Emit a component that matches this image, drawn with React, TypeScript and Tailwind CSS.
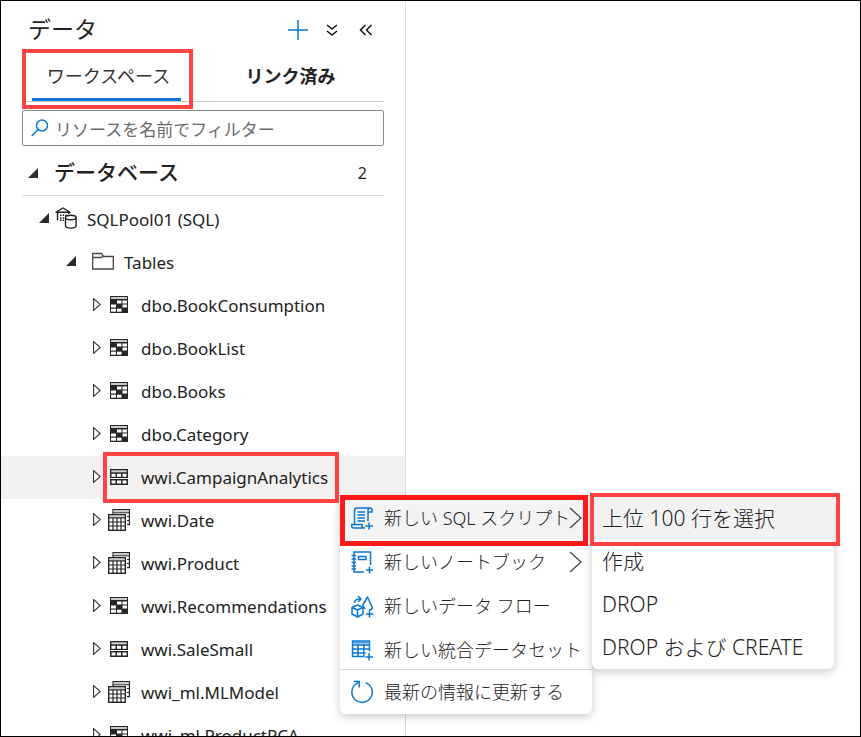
import type { ReactNode } from "react";

type TableKind = "replicated" | "roundRobin" | "hash";

const tables: { name: string; kind: TableKind; selected?: boolean }[] = [
  { name: "dbo.BookConsumption", kind: "replicated" },
  { name: "dbo.BookList", kind: "replicated" },
  { name: "dbo.Books", kind: "replicated" },
  { name: "dbo.Category", kind: "replicated" },
  { name: "wwi.CampaignAnalytics", kind: "roundRobin", selected: true },
  { name: "wwi.Date", kind: "hash" },
  { name: "wwi.Product", kind: "hash" },
  { name: "wwi.Recommendations", kind: "replicated" },
  { name: "wwi.SaleSmall", kind: "roundRobin" },
  { name: "wwi_ml.MLModel", kind: "hash" },
  { name: "wwi_ml.ProductPCA", kind: "replicated" },
];

function ReplicatedIcon() {
  return (
    <svg width="18" height="17" viewBox="0 0 18 17" aria-hidden="true">
      <rect width="18" height="17" fill="#262626" />
      <rect x="1" y="1" width="16" height="2" fill="#c9cbc9" />
      <g fill="#fff">
        <rect x="7" y="4.500" width="4.500" height="3" />
        <rect x="12.500" y="4.500" width="4.500" height="3" />
        <rect x="1" y="8.500" width="5" height="3" />
        <rect x="12.500" y="8.500" width="4.500" height="3" />
        <rect x="1" y="12.700" width="5" height="3" />
        <rect x="7" y="12.700" width="4.500" height="3" />
      </g>
    </svg>
  );
}

function RoundRobinIcon() {
  return (
    <svg width="18" height="16" viewBox="0 0 18 16" aria-hidden="true">
      <rect width="18" height="9" fill="#262626" />
      <rect x="1.300" y="1.300" width="15.400" height="2" fill="#d0d0d0" />
      <rect y="10" width="18" height="6" fill="#262626" />
      <g fill="#fff">
        <rect x="1.500" y="4.800" width="4" height="3" />
        <rect x="7" y="4.800" width="4" height="3" />
        <rect x="12.500" y="4.800" width="4" height="3" />
        <rect x="1.500" y="11.500" width="4" height="3" />
        <rect x="7" y="11.500" width="4" height="3" />
        <rect x="12.500" y="11.500" width="4" height="3" />
      </g>
    </svg>
  );
}

function HashIcon() {
  return (
    <svg width="22" height="22" viewBox="0 0 22 22" fill="none" stroke="#262626" aria-hidden="true">
      <path d="M5 5V.6h16.400v15H19" strokeWidth="1.200" />
      <path d="M5.600 1.300h15.200v2H5.600z" fill="#c9c9c9" stroke="none" />
      <path d="M5 3.800h16.400M19 7.500h2.400M19 11.500h2.400" />
      <rect x="0.700" y="5.700" width="16.600" height="15.600" fill="#fff" strokeWidth="1.400" />
      <path d="M1.400 7.400h15.200" stroke="#c4c4c4" />
      <path d="M1 8.800h16M1 13h16M1 17h16M5 9v12M9 9v12M13 9v12" strokeWidth="1.200" />
    </svg>
  );
}

function PoolIcon() {
  return (
    <svg width="22" height="22" viewBox="0 0 22 22" fill="none" stroke="#222" strokeWidth="1.400" aria-hidden="true">
      <path d="M0.500 5.500 8 1l7.500 4.500M1 5.300h14M2.500 5.500v8M13.700 5.500V7" />
      <path d="M5 8.200h7M5 11h4M5 13.300h4" strokeDasharray="1.500 1.200" />
      <ellipse cx="15.800" cy="10.500" rx="5.300" ry="2.200" />
      <path d="M10.500 10.500v8.300c0 1.300 2.400 2.300 5.300 2.300s5.300-1 5.300-2.300v-8.300" />
    </svg>
  );
}

function FolderIcon() {
  return (
    <svg width="22" height="18" viewBox="0 0 22 18" fill="none" stroke="#4a4543" strokeWidth="1.300" aria-hidden="true">
      <path d="M.7 17V1.500H9.500l2 3h9.800V17z" />
      <path d="M.7 5.500h8.500l2.300-1.500" />
    </svg>
  );
}

function OpenArrow() {
  return (
    <svg width="10" height="10" viewBox="0 0 10 10" className="shrink-0" aria-hidden="true">
      <path d="M10 0v10H0z" fill="#2b2b2b" />
    </svg>
  );
}

function ClosedArrow() {
  return (
    <svg width="8" height="13" viewBox="0 0 8 13" className="block" aria-hidden="true">
      <path d="M.6 .6v11.800L7.300 6.500z" fill="#fff" stroke="#333" strokeWidth="1.100" />
    </svg>
  );
}

function ScriptIcon() {
  return (
    <svg width="22" height="23" viewBox="0 0 22 23" fill="none" stroke="#0b78d4" strokeWidth="1.500" aria-hidden="true">
      <path d="M3.500 17V3.500C3.500 1.800 4.500 1 6 1h13c1.300 0 2 .8 2 2.300V5h-4V3c0-1.200.7-2 2-2M17 5v9M14 21H3c-1.500 0-2.300-.9-2.300-2v-1.500H11V19c0 1.200.8 2 2 2" />
      <path d="M6.500 5h7.500M6.500 8h7.500M6.500 11h7.500M6.500 14h7.500" />
      <path d="M18 15.500v7M14.500 19H22" />
    </svg>
  );
}

function NotebookIcon() {
  return (
    <svg width="22" height="23" viewBox="0 0 22 23" fill="none" stroke="#0b78d4" strokeWidth="1.500" aria-hidden="true">
      <path d="M13 21H3V1h16.500v13" />
      <path d="M7.500 5.500H15v3H7.500z" />
      <path d="M.5 4.500H5M.5 8H5M.5 11.500H5M.5 15H5M.5 18H5" />
      <path d="M18.500 15.500v7M15 19h7" />
    </svg>
  );
}

function DataFlowIcon() {
  return (
    <svg width="23" height="23" viewBox="0 0 23 23" fill="none" stroke="#0b78d4" strokeWidth="1.500" strokeLinejoin="round" aria-hidden="true">
      <path d="M1 12.500 6.500 10l5.500 2.500v6.500L6.500 22 1 19zM1 12.500 6.500 15l5.500-2.500M6.500 15v7" />
      <path d="M3.500 8C3.500 5 5.500 4 9.500 4M7 1l3 3-3 3" />
      <path d="M11.500 10.500 16.500 2l5 11c-.8 1.300-2 2-3.500 2M14 14l-2-3.500" />
      <path d="M18.500 15.500v7M15 19h7.500" />
    </svg>
  );
}

function DatasetIcon() {
  return (
    <svg width="22" height="21" viewBox="0 0 22 21" fill="none" stroke="#0b78d4" strokeWidth="1.500" aria-hidden="true">
      <path d="M13.500 16.500h-12V1h17v10.500M1.500 5h17M1.500 9h17M1.500 13h13M7 4v12.500M12.800 4v12.500" />
      <path d="M1.500 2.500h17" strokeWidth="2" stroke="#3d94dc" />
      <path d="M18 13v7.500M14.300 17H22" />
    </svg>
  );
}

function RefreshIcon() {
  return (
    <svg width="24" height="24" viewBox="0 0 24 24" fill="none" stroke="#0b78d4" strokeWidth="1.500" aria-hidden="true">
      <path d="M15.500 2.600a10.200 10.200 0 1 1-9.500 1.400L9 1.800" />
      <path d="M3.500 1.500H9.200V7.500" />
    </svg>
  );
}

function Outline({ className }: { className: string }) {
  return <span aria-hidden="true" className={`pointer-events-none absolute ${className}`} />;
}

function MenuItem({ icon, label, submenu, active }: { icon: ReactNode; label: string; submenu?: boolean; active?: boolean }) {
  return (
    <button
      type="button"
      role="menuitem"
      className={`relative flex h-11 w-full items-center pl-2.5 text-left text-lg font-light ${active ? "bg-[#f3f3f3]" : ""}`}
    >
      <span className="mr-2.5 flex w-6 shrink-0 justify-center">{icon}</span>
      <span className="whitespace-nowrap">{label}</span>
      {submenu && (
        <svg width="13" height="22" viewBox="0 0 13 22" fill="none" stroke="#444" strokeWidth="1.300" className="absolute right-2.5" aria-hidden="true">
          <path d="M1 1l11 10L1 21" />
        </svg>
      )}
      {active && <Outline className="-top-px -bottom-1.5 left-0 right-1 border-5 border-[#ff1a1a]" />}
    </button>
  );
}

export default function App() {
  return (
    <div className="relative flex h-screen overflow-hidden border border-black bg-white font-['Noto_Sans','Noto_Sans_CJK_JP',sans-serif] text-[#222]">
      <aside className="w-[405px] shrink-0 border-r border-[#dcdcdc]">
        <header className="flex h-12 items-center justify-between pl-[27px] pr-8 pt-2.5">
          <h1 className="pb-0.5 text-[23px] leading-8">データ</h1>
          <div className="flex items-center gap-4">
            <button type="button" aria-label="追加">
              <svg width="22" height="22" viewBox="0 0 22 22" stroke="#0b78d4" strokeWidth="1.500" aria-hidden="true">
                <path d="M11 1v20M1 11h20" />
              </svg>
            </button>
            <button type="button" aria-label="すべて展開">
              <svg width="14" height="14" viewBox="0 0 14 14" fill="none" stroke="#111" strokeWidth="1.500" aria-hidden="true">
                <path d="M2 2l5 4 5-4M2 8l5 4 5-4" />
              </svg>
            </button>
            <button type="button" aria-label="折りたたむ" className="pl-1">
              <svg width="14" height="14" viewBox="0 0 14 14" fill="none" stroke="#111" strokeWidth="1.500" aria-hidden="true">
                <path d="M6.500 2l-5 5 5 5M12.500 2l-5 5 5 5" />
              </svg>
            </button>
          </div>
        </header>

        <div role="tablist" className="mx-[21px] flex h-[53px] border-b border-[#c8c8c8] text-lg">
          <button type="button" role="tab" aria-selected="true" className="relative flex w-[171px] items-center justify-center pl-0.5 pt-0.5 text-[#333]">
            <span>ワークスペース</span>
            <span className="absolute bottom-0 left-2.5 right-3 h-[3px] bg-[#0b74d4]" />
            <Outline className="inset-x-0 top-0 -bottom-2 border-4 border-[#ff4343]" />
          </button>
          <button type="button" role="tab" aria-selected="false" className="flex flex-1 items-center justify-center pl-1 pt-0.5 font-bold">
            リンク済み
          </button>
        </div>

        <div className="mx-[21px] mt-2 flex h-9 items-center gap-1.5 rounded-xs border border-[#8a8a8a] px-2">
          <svg width="18" height="18" viewBox="0 0 18 18" fill="none" stroke="#0b78d4" strokeWidth="1.500" aria-hidden="true">
            <circle cx="11" cy="6.500" r="5.500" />
            <path d="M7 10.500.7 17" />
          </svg>
          <input
            type="text"
            aria-label="リソースを名前でフィルター"
            placeholder="リソースを名前でフィルター"
            className="h-8 min-w-0 flex-1 pt-0.5 text-[17px] outline-none placeholder:text-[#6b6b6b]"
          />
        </div>

        <div className="mx-[21px] flex h-[50px] items-center border-b border-[#d8d8d8] pl-1.5 pt-1">
          <OpenArrow />
          <h2 className="ml-4 flex-1 text-[21px] font-medium">データベース</h2>
          <span className="pr-[17px] text-base">2</span>
        </div>

        <ul role="tree" className="mt-0.5 text-[17px]">
          <li role="treeitem" aria-expanded="true" className="flex h-[43px] items-center pl-[38px]">
            <span className="pb-1"><OpenArrow /></span>
            <span className="ml-1.5 mr-2.5 pb-1"><PoolIcon /></span>
            SQLPool01 (SQL)
          </li>
          <li role="treeitem" aria-expanded="true" className="flex h-[43px] items-center pl-[65px]">
            <span className="pb-1"><OpenArrow /></span>
            <span className="ml-4 mr-2.5 pb-1"><FolderIcon /></span>
            Tables
          </li>
          {tables.map((table) => (
            <li
              key={table.name}
              role="treeitem"
              aria-selected={!!table.selected}
              className={`relative flex h-[43px] items-center pl-[92px] ${table.selected ? "bg-[#f2f1f0]" : ""}`}
            >
              <span className="pb-0.5"><ClosedArrow /></span>
              <span className="ml-[7px] mr-[11px] flex w-[22px] justify-center pb-0.5">
                {table.kind === "replicated" && <ReplicatedIcon />}
                {table.kind === "roundRobin" && <RoundRobinIcon />}
                {table.kind === "hash" && <HashIcon />}
              </span>
              <span>{table.name}</span>
              {table.selected && <Outline className="-inset-y-1 left-[102px] right-[66px] border-4 border-[#ff4343]" />}
            </li>
          ))}
        </ul>
      </aside>

      <main className="flex-1" />

      <div role="menu" className="absolute left-[339px] top-[495px] w-[252px] rounded-md bg-white shadow-[0_3px_10px_rgba(0,0,0,0.2)]">
        <MenuItem icon={<ScriptIcon />} label="新しい SQL スクリプト" submenu active />
        <MenuItem icon={<NotebookIcon />} label="新しいノートブック" submenu />
        <MenuItem icon={<DataFlowIcon />} label="新しいデータ フロー" />
        <MenuItem icon={<DatasetIcon />} label="新しい統合データセット" />
        <div className="-mt-[3px] border-t border-[#d6d6d6]">
          <MenuItem icon={<RefreshIcon />} label="最新の情報に更新する" />
        </div>
      </div>

      <div role="menu" className="absolute left-[591px] top-[496px] w-[242px] rounded-md bg-white text-[21px] font-light shadow-[0_3px_10px_rgba(0,0,0,0.2)]">
        {["上位 100 行を選択", "作成", "DROP", "DROP および CREATE"].map((label, index) => (
          <button
            key={label}
            type="button"
            role="menuitem"
            className={`relative flex h-[43px] w-full items-center whitespace-nowrap px-2.5 ${index === 0 ? "bg-[#f2f2f2]" : ""}`}
          >
            {label}
            {index === 0 && <Outline className="-bottom-1.5 -left-0.5 -right-1.5 -top-1 border-4 border-[#ff4343]" />}
          </button>
        ))}
      </div>
    </div>
  );
}
